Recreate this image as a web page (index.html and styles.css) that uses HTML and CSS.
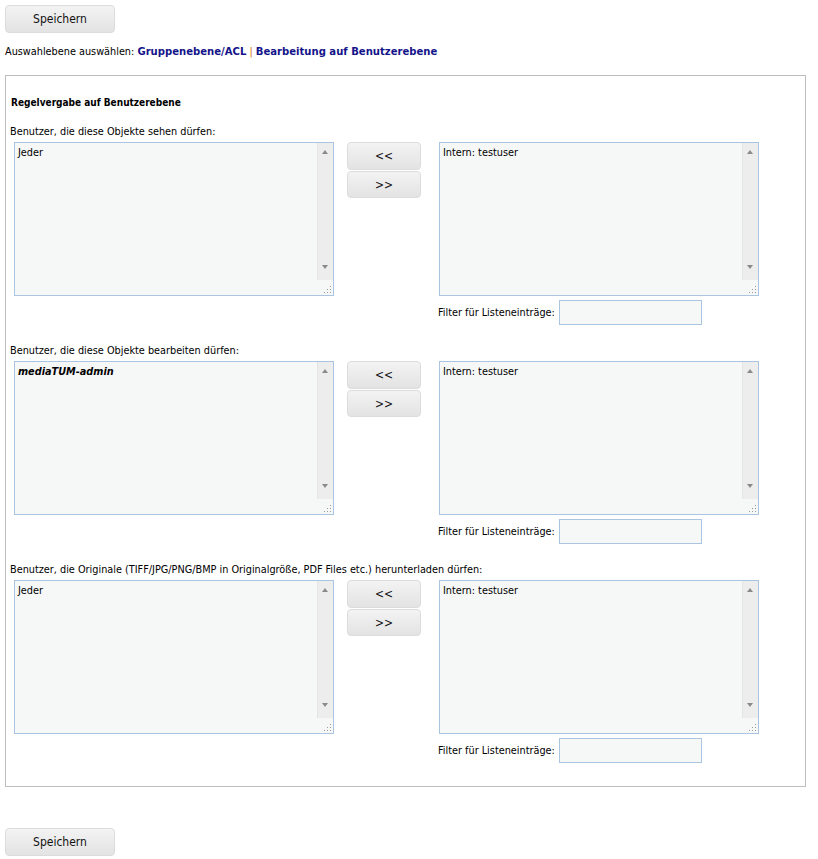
FILE: index.html
```html
<!DOCTYPE html>
<html lang="de">
<head>
<meta charset="utf-8">
<title>Regelvergabe</title>
<link rel="stylesheet" href="styles.css">
</head>
<body>
<button class="btn save">Speichern</button>
<p class="level">Auswahlebene auswählen: <a class="lnk" href="#">Gruppenebene/ACL</a> <span class="pipe">|</span> <a class="lnk" href="#">Bearbeitung auf Benutzerebene</a></p>
<div class="box">
  <h4 class="heading">Regelvergabe auf Benutzerebene</h4>

  <div class="label">Benutzer, die diese Objekte sehen dürfen:</div>
  <div class="row">
    <div class="list"><div class="items"><div>Jeder</div></div><div class="sb"><span class="up"></span><span class="down"></span></div><span class="grip"></span></div>
    <div class="moves"><button class="btn mv">&lt;&lt;</button><button class="btn mv mv2">&gt;&gt;</button></div>
    <div class="rightcol">
      <div class="list"><div class="items"><div>Intern: testuser</div></div><div class="sb"><span class="up"></span><span class="down"></span></div><span class="grip"></span></div>
      <div class="filter"><span>Filter für Listeneinträge:</span><input class="finput" type="text"></div>
    </div>
  </div>

  <div class="label l2">Benutzer, die diese Objekte bearbeiten dürfen:</div>
  <div class="row">
    <div class="list"><div class="items"><div class="grp">mediaTUM-admin</div></div><div class="sb"><span class="up"></span><span class="down"></span></div><span class="grip"></span></div>
    <div class="moves"><button class="btn mv">&lt;&lt;</button><button class="btn mv mv2">&gt;&gt;</button></div>
    <div class="rightcol">
      <div class="list"><div class="items"><div>Intern: testuser</div></div><div class="sb"><span class="up"></span><span class="down"></span></div><span class="grip"></span></div>
      <div class="filter"><span>Filter für Listeneinträge:</span><input class="finput" type="text"></div>
    </div>
  </div>

  <div class="label l2">Benutzer, die Originale (TIFF/JPG/PNG/BMP in Originalgröße, PDF Files etc.) herunterladen dürfen:</div>
  <div class="row">
    <div class="list"><div class="items"><div>Jeder</div></div><div class="sb"><span class="up"></span><span class="down"></span></div><span class="grip"></span></div>
    <div class="moves"><button class="btn mv">&lt;&lt;</button><button class="btn mv mv2">&gt;&gt;</button></div>
    <div class="rightcol">
      <div class="list"><div class="items"><div>Intern: testuser</div></div><div class="sb"><span class="up"></span><span class="down"></span></div><span class="grip"></span></div>
      <div class="filter"><span>Filter für Listeneinträge:</span><input class="finput" type="text"></div>
    </div>
  </div>
</div>
<button class="btn save bottom">Speichern</button>
</body>
</html>
```

FILE: styles.css
```css
html, body { background: #fff; }
body {
  margin: 0;
  padding: 5px;
  font-family: "DejaVu Sans Condensed", "Liberation Sans", Arial, sans-serif;
  font-size: 10.8px;
  color: #000;
}
.btn {
  font-family: "DejaVu Sans Condensed", "Liberation Sans", Arial, sans-serif;
  font-size: 12px;
  color: #111;
  background: linear-gradient(#f3f3f3, #e3e3e3);
  border: 1px solid #dcdcdc;
  border-radius: 4px;
  cursor: pointer;
  padding: 0;
  display: block;
}
.save { width: 110px; height: 28px; }
.save.bottom { margin-top: 41px; }
.level {
  margin: 0;
  margin-top: 12px;
  line-height: 14px;
  height: 14px;
}
.lnk {
  color: #14148a;
  font-weight: bold;
  font-size: 11.2px;
  text-decoration: none;
}
.pipe { color: #d07000; }
.box {
  margin-top: 16px;
  border: 1px solid #bdbdbd;
  width: 799px;
  height: 710px;
  box-sizing: content-box;
  padding: 0;
}
.heading {
  margin: 0;
  padding: 19px 0 0 5px;
  font-size: 10px;
  line-height: 16px;
  font-weight: bold;
}
.label {
  margin: 14px 0 0 4px;
  line-height: 14px;
}
.label.l2 { margin-top: 19px; }
.row {
  display: flex;
  align-items: flex-start;
  margin-top: 3px;
  padding-left: 8px;
}
.list {
  position: relative;
  width: 320px;
  height: 154px;
  box-sizing: border-box;
  border: 1px solid #a9c5e1;
  background: #f6f8f8;
  display: flex;
}
.items {
  flex: 1;
  padding: 3px 3px;
  line-height: 14px;
}
.grp { font-weight: bold; font-style: italic; }
.sb {
  position: relative;
  width: 15px;
  height: 137px;
  background: #ededed;
  border-left: 1px solid #e4e4e4;
}
.up, .down {
  position: absolute;
  left: 4px;
  width: 0;
  height: 0;
  border-left: 3.5px solid transparent;
  border-right: 3.5px solid transparent;
}
.up { top: 7px; border-bottom: 4px solid #8a8a8a; }
.down { bottom: 11px; border-top: 4px solid #8a8a8a; }
.grip {
  position: absolute;
  right: 2px;
  bottom: 2px;
  width: 8px;
  height: 8px;
  background:
    radial-gradient(circle, #9a9a9a 0.7px, transparent 1px) 0 0 / 3px 3px;
  clip-path: polygon(100% 0, 100% 100%, 0 100%);
}
.moves {
  margin-left: 13px;
  width: 74px;
  display: flex;
  flex-direction: column;
}
.mv { width: 74px; height: 28px; font-size: 12px; }
.mv2 { height: 27px; margin-top: 1px; }
.rightcol {
  margin-left: 18px;
  display: flex;
  flex-direction: column;
}
.filter {
  display: flex;
  align-items: center;
  margin-top: 4px;
  margin-left: -1px;
  gap: 4px;
}
.finput {
  width: 143px;
  height: 25px;
  box-sizing: border-box;
  border: 1px solid #a9c5e1;
  background: #f6f8f8;
  margin: 0;
  padding: 0;
}
```
